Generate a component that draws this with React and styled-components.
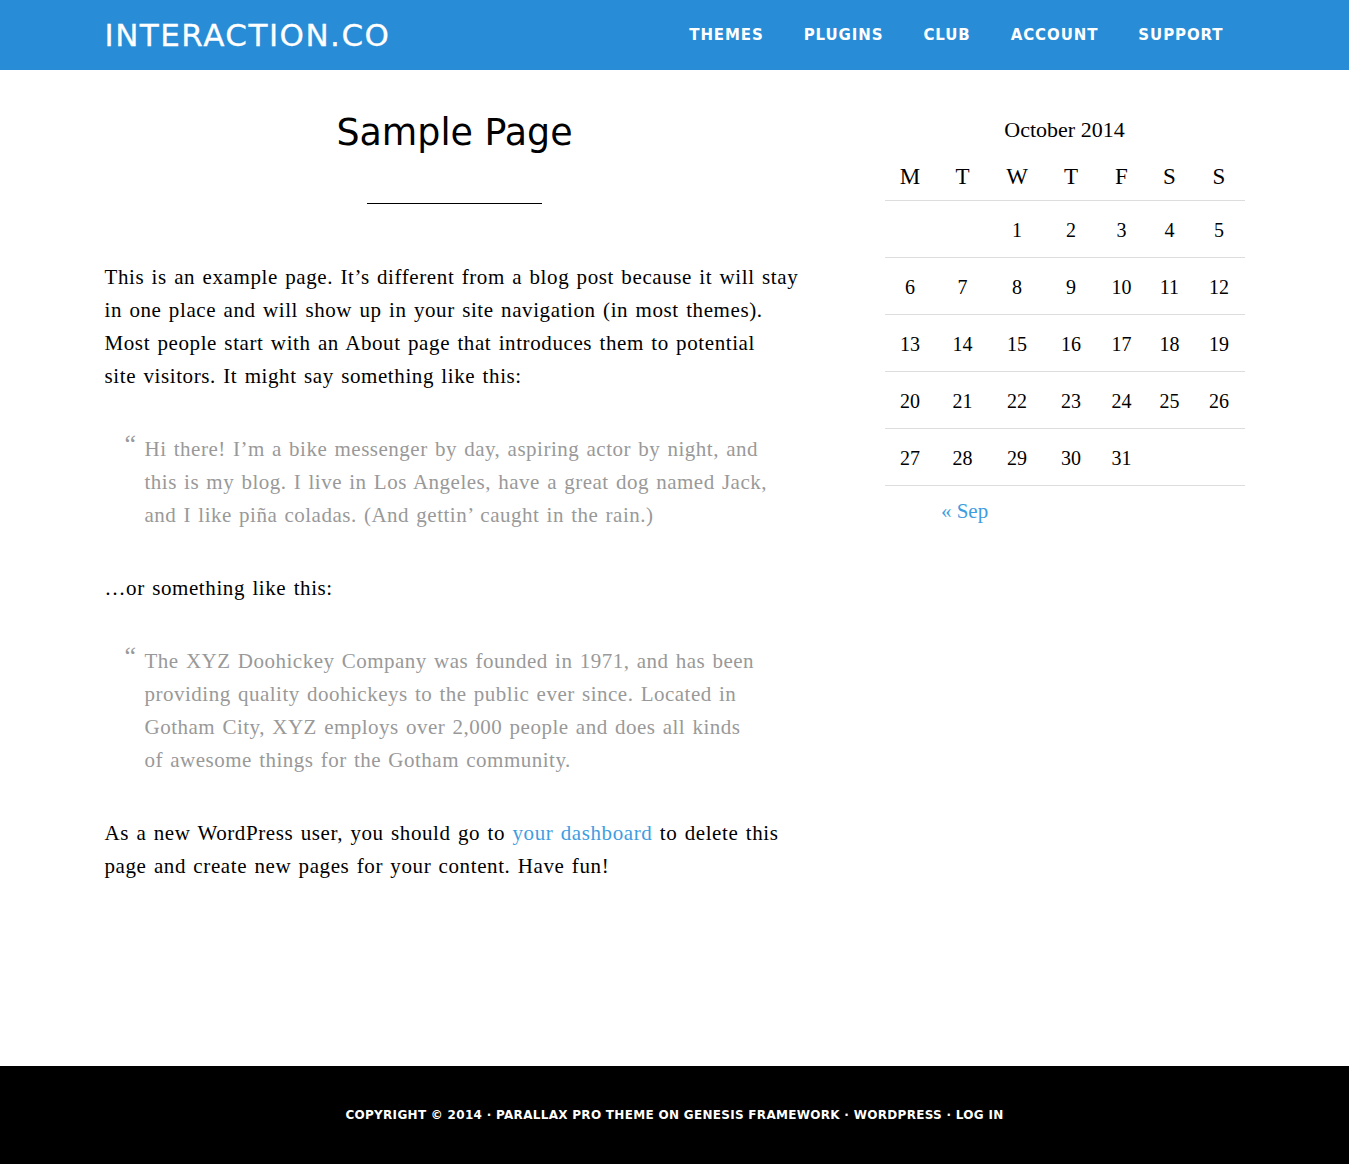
import React from "react";
import styled, { createGlobalStyle } from "styled-components";

const GlobalStyle = createGlobalStyle`
  html, body {
    margin: 0;
    padding: 0;
    background: #fff;
  }
  body {
    font-family: "Liberation Serif", serif;
    color: #000;
  }
  * {
    box-sizing: border-box;
  }
`;

const Header = styled.header`
  background: #288dd6;
  height: 70px;
`;

const Wrap = styled.div`
  width: 1140px;
  margin: 0 auto;
`;

const HeaderInner = styled(Wrap)`
  height: 70px;
  display: flex;
  align-items: center;
  justify-content: space-between;
`;

const Logo = styled.a`
  font-family: "DejaVu Sans", sans-serif;
  font-size: 31px;
  letter-spacing: 1.5px;
  color: #fff;
  text-decoration: none;
  line-height: 1;
  -webkit-text-stroke: 0.3px #fff;
`;

const Nav = styled.nav`
  display: flex;
  margin-right: 1px;
`;

const NavLink = styled.a`
  font-family: "DejaVu Sans", sans-serif;
  font-weight: bold;
  font-size: 15px;
  letter-spacing: 0.9px;
  color: #fff;
  text-decoration: none;
  padding: 0 20px;
  &:first-child {
    padding-left: 0;
  }
`;

const Main = styled(Wrap)`
  min-height: 996px;
  display: flex;
  gap: 80px;
`;

const Content = styled.article`
  width: 700px;
  padding-top: 41px;
`;

const Title = styled.h1`
  font-family: "DejaVu Sans", sans-serif;
  font-weight: normal;
  font-size: 36.4px;
  line-height: 44px;
  text-align: center;
  margin: 0;
`;

const Divider = styled.div`
  width: 175px;
  height: 1px;
  background: #000;
  margin: 48px auto 57px;
`;

const Para = styled.p`
  font-size: 21px;
  letter-spacing: 0.6px;
  word-spacing: 1.5px;
  line-height: 33px;
  white-space: nowrap;
  margin: 0 0 40px;
`;

const Quote = styled.blockquote`
  position: relative;
  color: #999;
  font-size: 21px;
  letter-spacing: 0.5px;
  word-spacing: 1.5px;
  line-height: 33px;
  white-space: nowrap;
  margin: 0 40px 40px;
  &::before {
    content: "\\201C";
    position: absolute;
    left: -20px;
    top: -6px;
    font-size: 26px;
    letter-spacing: 0;
    color: #999;
  }
`;

const Link = styled.a`
  color: #3e9de1;
  text-decoration: none;
`;

const Sidebar = styled.aside`
  width: 360px;
  padding-top: 45px;
`;

const Calendar = styled.table`
  width: 100%;
  border-collapse: collapse;
  table-layout: fixed;
`;

const Col = styled.col`
  width: ${(p) => p.$w}px;
`;

const Caption = styled.caption`
  font-size: 22px;
  line-height: 30px;
  margin-bottom: 12px;
`;

const HeadCell = styled.th`
  font-size: 23px;
  font-weight: normal;
  height: 43px;
  padding: 0 0 2px;
  text-align: center;
  border-bottom: 1px solid #ddd;
`;

const DayCell = styled.td`
  font-size: 20px;
  height: 57px;
  text-align: center;
  padding: 3px 0 0;
  border-bottom: 1px solid #ddd;
`;

const FootCell = styled.td`
  font-size: 21px;
  height: 52px;
  text-align: center;
  padding: 0;
`;

const Footer = styled.footer`
  background: #000;
  height: 98px;
  display: flex;
  align-items: center;
  justify-content: center;
`;

const FooterText = styled.p`
  margin: 0;
  font-family: "DejaVu Sans", sans-serif;
  font-weight: bold;
  font-size: 12px;
  letter-spacing: 0.3px;
  color: #fff;
  text-transform: uppercase;
`;

const navItems = ["Themes", "Plugins", "Club", "Account", "Support"];
const days = ["M", "T", "W", "T", "F", "S", "S"];
const colWidths = [51, 54, 55, 53, 48, 48, 51];
const weeks = [
  ["", "", 1, 2, 3, 4, 5],
  [6, 7, 8, 9, 10, 11, 12],
  [13, 14, 15, 16, 17, 18, 19],
  [20, 21, 22, 23, 24, 25, 26],
  [27, 28, 29, 30, 31, "", ""],
];

export default function App() {
  return (
    <>
      <GlobalStyle />
      <Header>
        <HeaderInner>
          <Logo href="#">INTERACTION.CO</Logo>
          <Nav>
            {navItems.map((item) => (
              <NavLink key={item} href="#">
                {item.toUpperCase()}
              </NavLink>
            ))}
          </Nav>
        </HeaderInner>
      </Header>

      <Main>
        <Content>
          <Title>Sample Page</Title>
          <Divider />
          <Para>
            This is an example page. It’s different from a blog post because it will stay
            <br />
            in one place and will show up in your site navigation (in most themes).
            <br />
            Most people start with an About page that introduces them to potential
            <br />
            site visitors. It might say something like this:
          </Para>
          <Quote>
            Hi there! I’m a bike messenger by day, aspiring actor by night, and
            <br />
            this is my blog. I live in Los Angeles, have a great dog named Jack,
            <br />
            and I like piña coladas. (And gettin’ caught in the rain.)
          </Quote>
          <Para>…or something like this:</Para>
          <Quote>
            The XYZ Doohickey Company was founded in 1971, and has been
            <br />
            providing quality doohickeys to the public ever since. Located in
            <br />
            Gotham City, XYZ employs over 2,000 people and does all kinds
            <br />
            of awesome things for the Gotham community.
          </Quote>
          <Para>
            As a new WordPress user, you should go to <Link href="#">your dashboard</Link> to
            delete this
            <br />
            page and create new pages for your content. Have fun!
          </Para>
        </Content>

        <Sidebar>
          <Calendar>
            <Caption>October 2014</Caption>
            <colgroup>
              {colWidths.map((w, i) => (
                <Col key={i} $w={w} />
              ))}
            </colgroup>
            <thead>
              <tr>
                {days.map((d, i) => (
                  <HeadCell key={i}>{d}</HeadCell>
                ))}
              </tr>
            </thead>
            <tbody>
              {weeks.map((week, i) => (
                <tr key={i}>
                  {week.map((d, j) => (
                    <DayCell key={j}>{d}</DayCell>
                  ))}
                </tr>
              ))}
            </tbody>
            <tfoot>
              <tr>
                <FootCell colSpan={3}>
                  <Link href="#">« Sep</Link>
                </FootCell>
                <FootCell />
                <FootCell colSpan={3} />
              </tr>
            </tfoot>
          </Calendar>
        </Sidebar>
      </Main>

      <Footer>
        <FooterText>
          Copyright © 2014 · Parallax Pro Theme on Genesis Framework · WordPress · Log in
        </FooterText>
      </Footer>
    </>
  );
}
